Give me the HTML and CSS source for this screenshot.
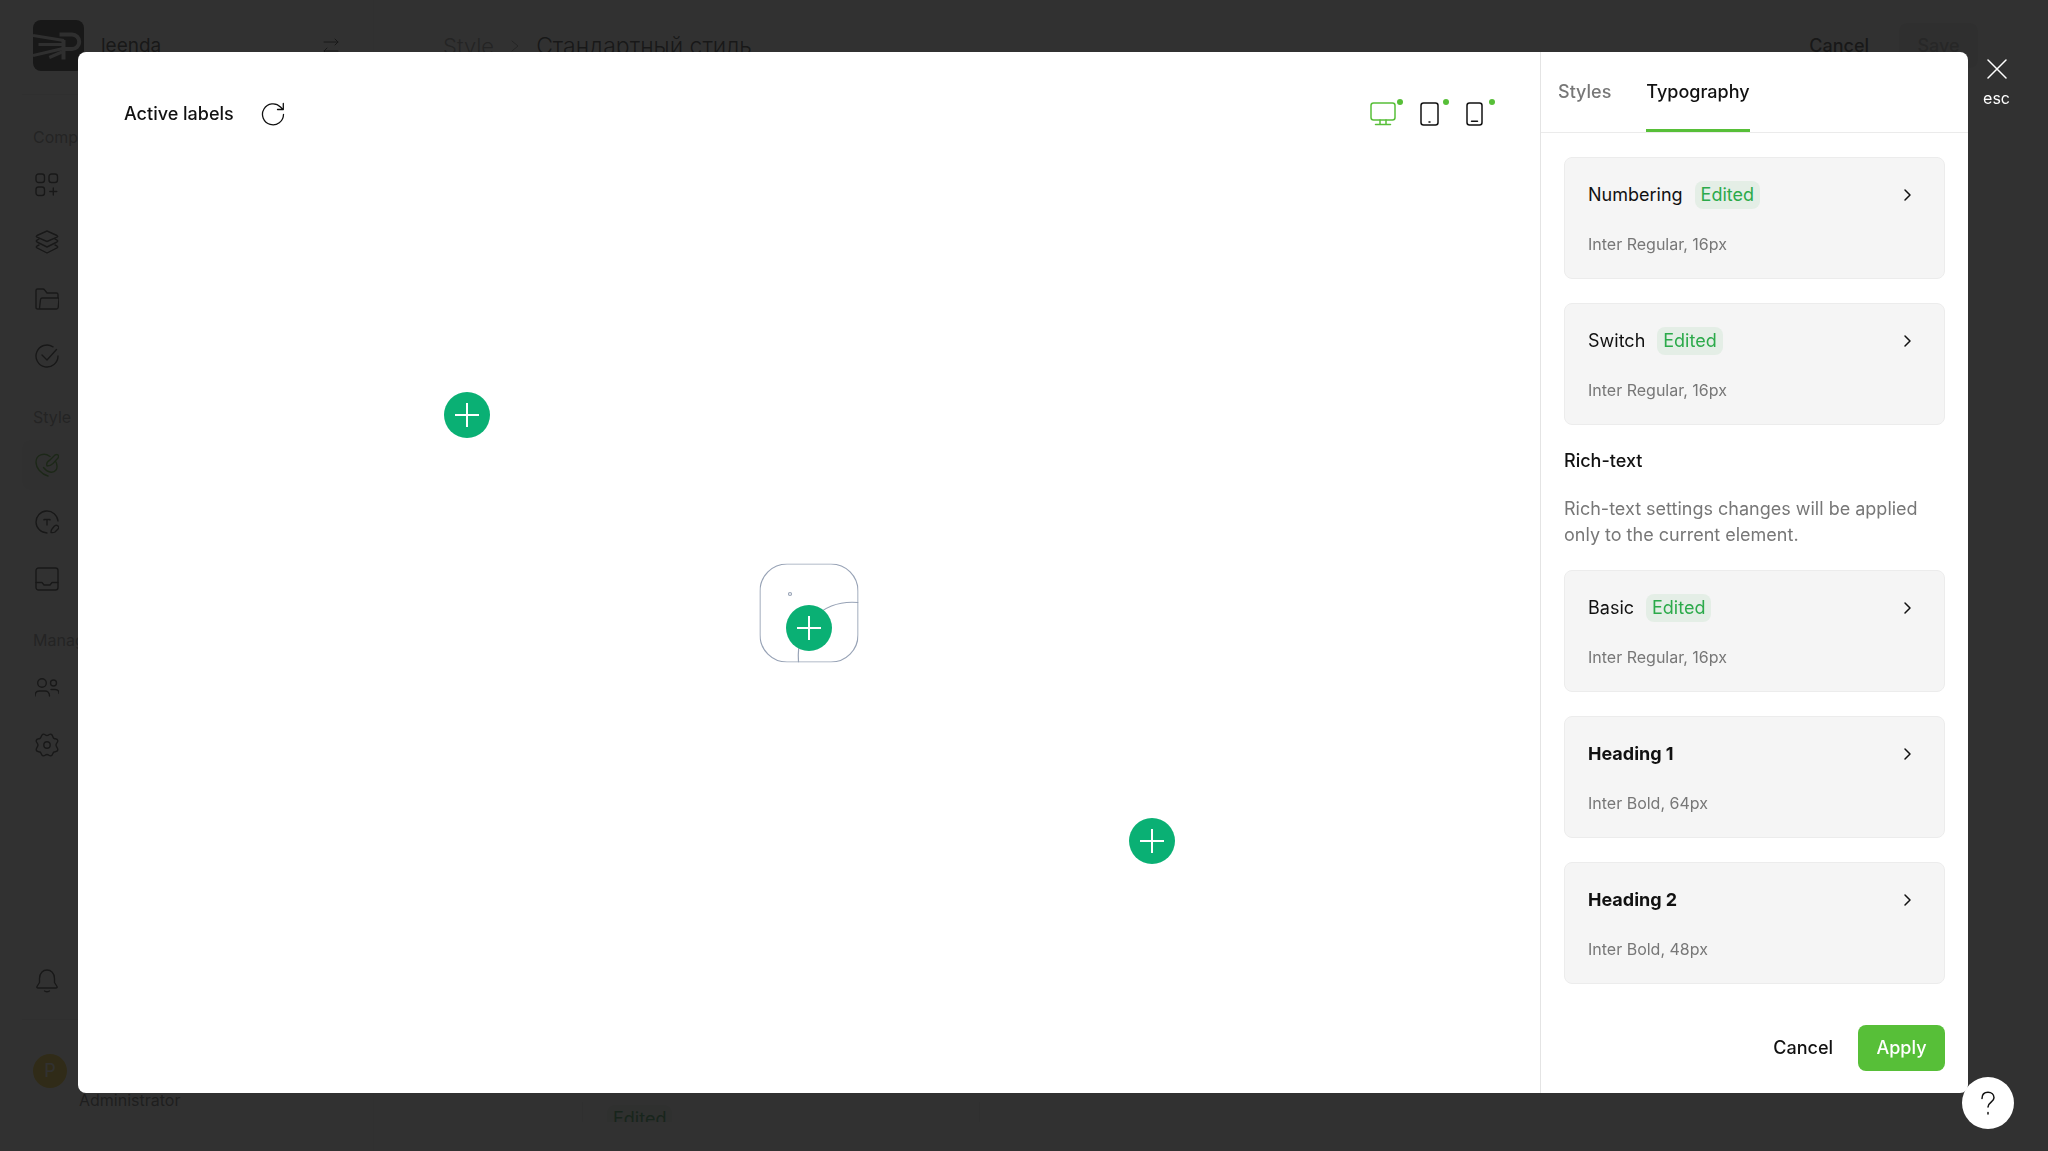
FILE: index.html
```html
<!DOCTYPE html>
<html lang="en">
<head>
  <meta charset="utf-8">
  <title>Active labels</title>
  <link rel="stylesheet" href="styles.css">
</head>
<body>
  <!-- ---------- App behind the modal ---------- -->
  <div class="app">
    <aside class="sidebar">
      <div class="workspace">
        <svg class="logo" viewBox="0 0 51 51">
          <rect width="51" height="51" rx="8" fill="#000"/>
          <g fill="none" stroke="#e8e8e8" stroke-width="3" stroke-linecap="butt">
            <path d="M0 15.500 31 20.500M5.500 24.400H30M0 35.500 30 28.500M16.300 37.500 29 32"/>
            <path d="M26.500 14.500H39a7 7 0 0 1 0 14.500H32" stroke-width="4"/>
            <path d="M30.500 20V39.500" stroke-width="4"/>
          </g>
        </svg>
        <span class="workspace-name">leenda</span>
        <svg class="swap" viewBox="0 0 24 24"><path d="M5 8h14M16 5l3 3-3 3M19 17H5M8 14l-3 3 3 3"/></svg>
      </div>

      <nav class="nav">
        <h2>Company</h2>
        <a href="#" aria-label="Projects"><svg viewBox="0 0 24 24"><rect x="1" y="1" width="8.500" height="8.500" rx="2.500"/><rect x="14" y="1" width="8.500" height="8.500" rx="2.500"/><rect x="1" y="14" width="8.500" height="8.500" rx="2.500"/><path d="M18.300 15v7M14.800 18.500h7"/></svg></a>
        <a href="#" aria-label="Layers"><svg viewBox="0 0 24 24"><path d="M12 1 22 5.500q1.500.8 0 1.700L12 11.500 2 7.200q-1.500-.9 0-1.700ZM4 9 2 10.200q-1.500.9 0 1.800l10 5 10-5q1.500-.9 0-1.800L20 9M4 15l-2 1q-1.500.9 0 1.800L12 23l10-5.200q1.500-.9 0-1.800l-2-1"/></svg></a>
        <a href="#" aria-label="Files"><svg viewBox="0 0 24 24"><path d="M6 22H2.500Q1 22 1 20.500v-17Q1 2 2.500 2H8q1 0 1.700 1L12 6h9.500Q23 6 23 7.500V11M5.500 12.500Q5.800 11 7.200 11H23q1 0 1 1l-.8 8.500Q23 22 21.500 22H6q-1.500 0-1.400-1.500Z"/></svg></a>
        <a href="#" aria-label="Tasks"><svg viewBox="0 0 24 24"><path d="M18 2.800A11 11 0 1 0 23 12M7 11l5 5L21.500 5.500"/></svg></a>
        <h2>Style</h2>
        <a href="#" class="active" aria-label="Element styles"><svg viewBox="0 0 24 24"><path d="M13 23C6 21 1 15 1 9 1 2 9-1 15 3.500M21 9c3 7-1 11-6 10-3-.5-5-2.500-6.500-4.500M12 13c-1-3 1-5 3-6l5-5q2-1 3 0t0 3l-5 5.500Q15.500 13 12 13Z"/></svg></a>
        <a href="#" aria-label="Text styles"><svg viewBox="0 0 24 24"><path d="M12 23A11 11 0 1 1 23 11M9 10V9.500h6v.5M12 9.500V15M16 22.500q0-2.500 1-3.500l2.500-3q2-1.500 3.500 0t0 3l-3 3Q18.500 23 16 22.500Z"/></svg></a>
        <a href="#" aria-label="Templates"><svg viewBox="0 0 24 24"><rect x="1" y="1" width="22" height="22" rx="2.500"/><path d="M1 15.500h6l2 2.500h6l2-2.500h6"/></svg></a>
        <h2>Management</h2>
        <a href="#" aria-label="Users"><svg viewBox="0 0 24 24"><circle cx="7" cy="7" r="4.300"/><circle cx="18.500" cy="7" r="3"/><path d="M0 20c0-3.500 2-5 4.500-5h5.500c2.500 0 4.500 1.500 4.500 5M16 13.500h4c2.500 0 4 1.500 4 4"/></svg></a>
        <a href="#" aria-label="Settings"><svg viewBox="0 0 24 24"><circle cx="12" cy="12" r="3.200"/><path d="M12 2.500C14 2.500 14 .8 16 1.200S17.500 5 19 5.500s3.500 0 3.800 2S21 10 21 12s2.200 3 1.800 5-2.300 1.500-3.800 2-1 3.300-3 3.800-2-1.300-4-1.300-2 1.800-4 1.300S6.500 19.500 5 19s-3.400 0-3.800-2S3 14 3 12 .8 9.500 1.200 7.500 3.500 6 5 5.500 6 1.700 8 1.200 10 2.500 12 2.500Z"/></svg></a>
      </nav>

      <div class="sidebar-bottom">
        <a href="#" aria-label="Notifications"><svg viewBox="0 0 24 24"><path d="M4.500 9.500C4.500 4 8 1 12 1s7.500 3 7.500 8.500v4l2.500 4q.5 1.500-1 1.500H3q-1.500 0-1-1.500l2.500-4ZM9.500 22q2.500 1.500 5 0"/></svg></a>
        <div class="user">
          <span class="avatar">P</span>
          <span class="role">Administrator</span>
        </div>
      </div>
    </aside>

    <main class="page">
      <header class="page-header">
        <a href="#" class="crumb">Style</a>
        <svg class="crumb-arrow" viewBox="0 0 8 12"><path d="M1 1l6 5-6 5"/></svg>
        <h1>Стандартный стиль</h1>
        <button class="page-cancel">Cancel</button>
        <button class="page-save">Save</button>
      </header>
      <div class="page-scroll">
        <div class="page-card"><span class="badge">Edited</span></div>
      </div>
    </main>
  </div>

  <!-- ---------- Modal ---------- -->
  <div class="overlay">
    <div class="modal" role="dialog" aria-label="Active labels">
      <section class="preview">
        <header class="preview-header">
          <h2>Active labels</h2>
          <button class="icon-btn" aria-label="Reset"><svg viewBox="0 0 24 24"><path d="M22.500 12.500A10.500 10.500 0 1 1 19.500 5L22 7.500M22.300 1.500V7.500H16.500"/></svg></button>
          <div class="devices">
            <button class="device on" aria-label="Desktop"><svg viewBox="0 0 26 24"><rect x="1" y="1" width="24" height="17" rx="2.500"/><path d="M10 18v4M16 18v4M5.500 22.500h15"/></svg></button>
            <button class="device" aria-label="Tablet"><svg viewBox="0 0 26 24"><rect x="5" y="1" width="17" height="22" rx="2.500"/><path d="M13 20h1"/></svg></button>
            <button class="device" aria-label="Phone"><svg viewBox="0 0 26 24"><rect x="5" y="1" width="15" height="22" rx="2.500"/><path d="M9.500 19.300h6"/></svg></button>
          </div>
        </header>
        <div class="stage">
          <svg class="placeholder" viewBox="0 0 99 99">
            <rect x=".5" y=".5" width="98" height="98" rx="27"/>
            <circle cx="30.500" cy="30.500" r="1.500"/>
            <path d="M39 98.500C36 62 64 36 98.500 39"/>
          </svg>
          <button class="pin pin-start" aria-label="Add label"></button>
          <button class="pin" aria-label="Add label"></button>
          <button class="pin pin-end" aria-label="Add label"></button>
        </div>
      </section>

      <section class="panel">
        <nav class="tabs">
          <button class="tab">Styles</button>
          <button class="tab selected">Typography</button>
        </nav>
        <div class="settings">
          <button class="card">
            <span class="card-title">Numbering <span class="badge">Edited</span></span>
            <svg class="chevron" viewBox="0 0 24 24"><path d="M10 7l5 5-5 5"/></svg>
            <span class="card-font">Inter Regular, 16px</span>
          </button>
          <button class="card">
            <span class="card-title">Switch <span class="badge">Edited</span></span>
            <svg class="chevron" viewBox="0 0 24 24"><path d="M10 7l5 5-5 5"/></svg>
            <span class="card-font">Inter Regular, 16px</span>
          </button>
          <div class="intro">
            <h3>Rich-text</h3>
            <p>Rich-text settings changes will be applied only to the current element.</p>
          </div>
          <button class="card">
            <span class="card-title">Basic <span class="badge">Edited</span></span>
            <svg class="chevron" viewBox="0 0 24 24"><path d="M10 7l5 5-5 5"/></svg>
            <span class="card-font">Inter Regular, 16px</span>
          </button>
          <button class="card">
            <span class="card-title bold">Heading 1</span>
            <svg class="chevron" viewBox="0 0 24 24"><path d="M10 7l5 5-5 5"/></svg>
            <span class="card-font">Inter Bold, 64px</span>
          </button>
          <button class="card">
            <span class="card-title bold">Heading 2</span>
            <svg class="chevron" viewBox="0 0 24 24"><path d="M10 7l5 5-5 5"/></svg>
            <span class="card-font">Inter Bold, 48px</span>
          </button>
        </div>
        <footer class="actions">
          <button class="cancel">Cancel</button>
          <button class="apply">Apply</button>
        </footer>
      </section>
    </div>

    <button class="close">
      <svg viewBox="0 0 20 20"><path d="M1 1l18 18M19 1L1 19"/></svg>
      esc
    </button>
  </div>

  <button class="help" aria-label="Help">
    <svg viewBox="0 0 14 24"><path d="M1 7.500C1 3.500 3.500 1.200 7 1.200s6 2.300 6 5.500c0 4.500-6 4.300-6 9.300M7 21.500v1.500"/></svg>
  </button>
</body>
</html>
```
FILE: styles.css
```css
* { box-sizing: border-box; }
body {
  margin: 0;
  height: 100vh;
  overflow: hidden;
  background: #fff;
  color: #111;
  font-family: Inter, "Liberation Sans", sans-serif;
  font-size: 18px;
  line-height: 26px;
}
h1, h2, h3, p { margin: 0; font-size: inherit; font-weight: 500; }
button {
  font: inherit;
  color: inherit;
  background: none;
  border: 0;
  padding: 0;
  cursor: pointer;
}
a { color: inherit; text-decoration: none; }
svg { display: block; flex: none; fill: none; stroke: currentColor; stroke-linecap: round; stroke-linejoin: round; }

/* --- App --- */
.app { display: flex; height: 100%; color: #000; }
.sidebar {
  display: flex;
  flex-direction: column;
  width: 374px;
  padding: 20px 22px 0;
  border-right: 1px solid #eee;
}
.workspace {
  display: flex;
  align-items: center;
  height: 75px;
  padding: 0 8px 23px 11px;
  border-bottom: 1px solid #e8e8e8;
}
.logo { width: 51px; height: 51px; stroke: none; }
.workspace-name { margin-left: 17px; font-size: 19px; }
.swap { width: 24px; margin-left: auto; }

.nav { display: flex; flex-direction: column; gap: 7px; padding-top: 32px; }
.nav h2 {
  padding-left: 11px;
  margin-bottom: 6px;
  color: #777;
  font-size: 16px;
  font-weight: 400;
  line-height: 20px;
}
.nav a + h2 { margin-top: 19px; }
.nav a, .sidebar-bottom a {
  display: flex;
  align-items: center;
  height: 50px;
  padding-left: 13px;
  border-radius: 8px;
}
.nav svg, .sidebar-bottom svg { width: 24px; stroke-width: 1.4; }
.nav .active { background: #f5f5f5; color: #2f9900; }

.sidebar-bottom { margin-top: auto; }
.user {
  display: flex;
  gap: 12px;
  height: 132px;
  margin-top: 13px;
  padding: 34px 11px 0;
  border-top: 1px solid #e8e8e8;
}
.avatar {
  width: 34px;
  height: 34px;
  border-radius: 50%;
  background: #f0c000;
  color: #fff;
  line-height: 34px;
  text-align: center;
}
.role { align-self: end; margin-bottom: 38px; font-size: 16px; color: #444; }

.page { flex: 1; display: flex; flex-direction: column; padding: 23px 70px 29px 69px; }
.page-header { display: flex; align-items: center; height: 45px; }
.crumb { color: #777; font-size: 22px; font-weight: 300; }
.crumb-arrow { width: 8px; margin: 0 17px; color: #777; }
.page-header h1 { font-size: 23px; font-weight: 300; }
.page-cancel { margin-left: auto; font-weight: 500; }
.page-save {
  width: 79px;
  height: 45px;
  margin-left: 30px;
  border-radius: 8px;
  background: #e8e8e8;
  color: #999;
  font-weight: 500;
}
.page-scroll { flex: 1; display: flex; align-items: flex-end; padding-left: 139px; overflow: hidden; }
.page-card {
  width: 398px;
  height: 80px;
  margin-bottom: -60px;
  padding: 3px 24px 0;
  border: 1px solid #e8e8e8;
  border-width: 0 1px;
}
.page-card .badge { color: #00822a; }

/* --- Modal --- */
.overlay {
  position: fixed;
  inset: 0;
  padding: 52px 80px 58px 78px;
  background: rgba(27, 27, 27, 0.9);
}
.modal { display: flex; height: 100%; border-radius: 8px; background: #fff; overflow: hidden; }

.preview { flex: 1; display: flex; flex-direction: column; }
.preview-header {
  display: flex;
  align-items: center;
  padding: 49px 52px 36px 46px;
}
.icon-btn { margin-left: 27px; }
.icon-btn svg { width: 24px; stroke-width: 1.3; }
.devices { display: flex; gap: 20px; margin-left: auto; }
.device { position: relative; }
.device svg { width: 26px; stroke-width: 1.5; }
.device::after {
  content: "";
  position: absolute;
  top: -3px;
  right: -7px;
  width: 6px;
  height: 6px;
  border-radius: 50%;
  background: #57bf38;
}
.device.on { color: #57bf38; }

.stage { position: relative; flex: 1; }
.placeholder {
  position: absolute;
  left: 50%;
  top: calc(50% - 15px);
  width: 99px;
  transform: translate(-50%, -50%);
  stroke: #98a3b6;
  stroke-width: 1.2;
}
.pin {
  position: absolute;
  left: 50%;
  top: 50%;
  width: 46px;
  height: 46px;
  border-radius: 50%;
  transform: translate(-50%, -50%);
  background:
    linear-gradient(#fff, #fff) center / 24px 2px no-repeat,
    linear-gradient(#fff, #fff) center / 2px 24px no-repeat,
    #0ab074;
}
.pin-start { left: calc(50% - 342px); top: calc(50% - 213px); }
.pin-end { left: calc(50% + 343px); top: calc(50% + 213px); }

/* --- Settings panel --- */
.panel {
  display: flex;
  flex-direction: column;
  width: 428px;
  border-left: 1px solid #e4e4e4;
}
.tabs { display: flex; gap: 35px; height: 81px; padding-left: 17px; border-bottom: 1px solid #ebebeb; }
.tab { padding-top: 2px; border-bottom: 3px solid transparent; color: #777; font-weight: 500; }
.tab.selected { border-color: #57bf38; border-radius: 2px 2px 0 0; color: #111; }

.settings { flex: 1; padding: 24px 23px 0; overflow: hidden; }
.card {
  display: grid;
  grid-template-columns: 1fr 24px;
  align-items: center;
  row-gap: 23px;
  width: 100%;
  height: 122px;
  margin-bottom: 24px;
  padding: 23px 25px 22px 23px;
  border: 1px solid #ececec;
  border-radius: 8px;
  background: #f5f5f5;
  text-align: left;
}
.card:last-child { margin-bottom: 0; }
.card-title { display: flex; align-items: center; gap: 12px; }
.card-title.bold { font-weight: 700; }
.badge {
  display: inline-block;
  padding: 1px 6px;
  border-radius: 8px;
  background: #e4eee6;
  color: #2baa4a;
}
.chevron { width: 24px; stroke-width: 1.5; }
.card-font { color: #777; font-size: 16px; line-height: 24px; }
.intro { margin-top: -1px; padding-bottom: 22px; }
.intro p { margin-top: 22px; color: #777; font-weight: 400; }

.actions { display: flex; justify-content: flex-end; gap: 25px; padding: 0 23px 22px; font-weight: 500; }
.apply { width: 87px; height: 46px; border-radius: 8px; background: #57bf38; color: #fff; }

.close {
  position: absolute;
  top: 59px;
  right: 38px;
  color: #fff;
  font-size: 16px;
}
.close svg { width: 20px; margin: 0 auto 6px; stroke-width: 1.5; }
.help {
  position: fixed;
  right: 34px;
  bottom: 22px;
  display: grid;
  place-items: center;
  width: 52px;
  height: 52px;
  border-radius: 50%;
  background: #fff;
}
.help svg { width: 14px; stroke-width: 1.5; }
```
